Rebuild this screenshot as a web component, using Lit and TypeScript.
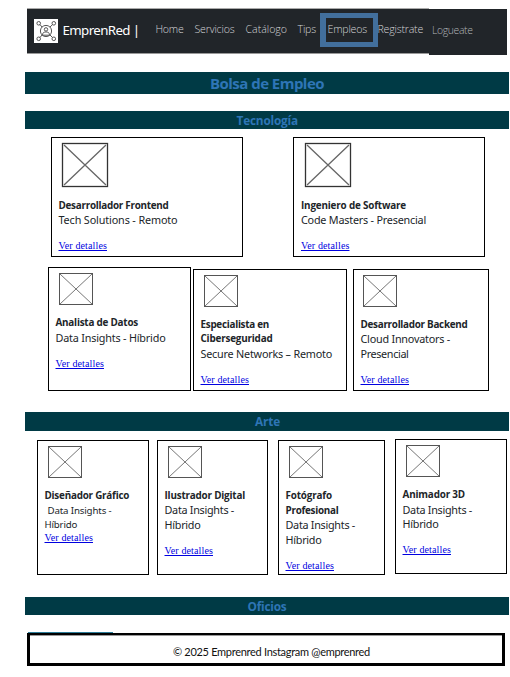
import { LitElement, html, css, svg } from "lit";
import { customElement, property } from "lit/decorators.js";

type Kind = "title" | "sub" | "small" | "link";
interface Line { t: string; k: Kind; w: number; b: number; dx?: number }
interface Job { gap: number; drop: number; w: number; h: number; pad: number; icon: number; big?: boolean; lines: Line[] }

const L = (k: Kind, t: string, w: number, b: number, dx = 0): Line => ({ t, k, w, b, dx });
const details = (b: number, dx = 0) => L("link", "Ver detalles", 48.5, b, dx);

const tech1: Job[] = [
  { gap: 51, drop: 0, w: 192, h: 120, pad: 7.5, icon: 10, big: true, lines: [
    L("title", "Desarrollador Frontend", 110, 72), L("sub", "Tech Solutions - Remoto", 119, 87), details(112)] },
  { gap: 50, drop: 0, w: 192, h: 120, pad: 8, icon: 11, big: true, lines: [
    L("title", "Ingeniero de Software", 105, 72), L("sub", "Code Masters - Presencial", 125, 87), details(112)] },
];
const tech2: Job[] = [
  { gap: 48, drop: 0, w: 143, h: 124, pad: 7.5, icon: 10, lines: [
    L("title", "Analista de Datos", 82.5, 59), L("sub", "Data Insights - Híbrido", 110, 75), details(100)] },
  { gap: 2, drop: 2, w: 154, h: 122, pad: 7.5, icon: 10, lines: [
    L("title", "Especialista en", 68.5, 59), L("title", "Ciberseguridad", 72, 73),
    L("sub", "Secure Networks – Remoto", 131.5, 89), details(114)] },
  { gap: 6, drop: 2, w: 136, h: 122, pad: 7.5, icon: 9, lines: [
    L("title", "Desarrollador Backend", 107, 59), L("sub", "Cloud Innovators -", 89.5, 74),
    L("sub", "Presencial", 48, 89), details(114)] },
];
const art: Job[] = [
  { gap: 37, drop: 1, w: 112, h: 135, pad: 7.5, icon: 10, lines: [
    L("title", "Diseñador Gráfico", 84.7, 59), L("small", "Data Insights -", 64, 74, 3),
    L("small", "Híbrido", 32.7, 88), details(101)] },
  { gap: 8, drop: 1, w: 111, h: 135, pad: 7.5, icon: 10, lines: [
    L("title", "Ilustrador Digital", 80.5, 59), L("sub", "Data Insights -", 69.5, 74),
    L("sub", "Híbrido", 36, 89), details(114)] },
  { gap: 10, drop: 1, w: 107, h: 135, pad: 7.5, icon: 10, lines: [
    L("title", "Fotógrafo", 46.5, 59), L("title", "Profesional", 53, 74),
    L("sub", "Data Insights -", 69.5, 89), L("sub", "Híbrido", 36, 104), details(129)] },
  { gap: 10, drop: 0, w: 112, h: 135, pad: 7.5, icon: 10, lines: [
    L("title", "Animador 3D", 62.5, 59), L("sub", "Data Insights -", 69.5, 75),
    L("sub", "Híbrido", 36, 89), details(114)] },
];

/** Text run whose tracking is computed so that it fills a given width. */
@customElement("fit-text")
class FitText extends LitElement {
  static styles = css`
    :host { display: block; white-space: nowrap; }
    .run { display: inline-block; white-space: pre; text-decoration: inherit; }
  `;
  @property() text = "";
  @property({ type: Number }) width = 0;
  updated() {
    const run = this.renderRoot.querySelector(".run") as HTMLElement;
    run.style.letterSpacing = "0px";
    const natural = run.getBoundingClientRect().width;
    const step = (this.width - natural) / this.text.length;
    run.style.letterSpacing = step.toFixed(3) + "px";
  }
  render() { return html`<span class="run">${this.text}</span>`; }
}

@customElement("job-card")
class JobCard extends LitElement {
  static styles = css`
    :host { display: block; flex: none; }
    .card { box-sizing: border-box; height: 100%; border: 1px solid #000; padding-top: 4px; background: #fff; }
    svg { display: block; height: 34px; width: 36px; }
    svg.big { width: 48px; height: 46px; }
    .lines { height: 0; }
    .line { height: 15px; line-height: 15px; color: #212529; }
    .title { font: 700 9.9px/15px "Open Sans", "Noto Sans", sans-serif; }
    .sub { font: 400 10.8px/15px "Noto Sans", "Open Sans", sans-serif; }
    .small { font: 400 9.7px/15px "Noto Sans", "Open Sans", sans-serif; }
    .link { font: 400 10px/15px "Liberation Serif", serif; color: #0000e0; text-decoration: underline; }
  `;
  @property({ attribute: false }) job!: Job;
  render() {
    const j = this.job;
    const top = j.big ? 51 : 39;
    const base: Record<Kind, number> = { title: 11, sub: 12, small: 11, link: 11 };
    let y = top;
    return html`<div class="card">
      ${j.big
        ? html`<svg class="big" style="margin-left:${j.icon - 1}px" viewBox="0 0 48 46">
            ${svg`<rect x="1.5" y="1.5" width="45" height="43" fill="none" stroke="#333" stroke-width="1.3"/>
            <path d="M3 3L45 43M45 3L3 43" stroke="#666" stroke-width="1.3"/>`}</svg>`
        : html`<svg style="margin-left:${j.icon - 1}px" viewBox="0 0 36 34">
            ${svg`<rect x="1.5" y="1.5" width="33" height="31" fill="none" stroke="#555" stroke-width="1"/>
            <path d="M2 2L34 32M34 2L2 32" stroke="#777" stroke-width="1"/>`}</svg>`}
      <div class="lines">
        ${j.lines.map((l) => {
          const start = l.b - base[l.k];
          const gap = start - y;
          y = start + 15;
          return html`<fit-text class="line ${l.k}" .text=${l.t} .width=${l.w}
            style="margin-top:${gap}px;margin-left:${j.pad - 1 + (l.dx ?? 0)}px"></fit-text>`;
        })}
      </div>
    </div>`;
  }
}

@customElement("app-root")
class AppRoot extends LitElement {
  static styles = css`
    :host { display: block; width: 510px; height: 677px; overflow: hidden; background: #fff; font-family: "Open Sans", "Noto Sans", sans-serif; }
    header { display: flex; height: 47px; padding: 8px 0 0 27px; }
    .nav { box-sizing: border-box; display: flex; width: 402px; height: 46px; background: #212529; border-top: 1px solid #aaa; border-bottom: 1px solid #999; }
    .logo { display: block; width: 24px; height: 24px; margin: 10px 4.5px 0 7px; flex: none; }
    .brand { font-family: "Noto Sans", sans-serif; font-size: 13.3px; line-height: 20px; color: #fff; margin-top: 11px; width: 93px; flex: none; }
    .item { font-size: 10.6px; line-height: 16px; color: #d2d4d6; font-weight: 300; margin-top: 12px; flex: none; }
    .active { box-sizing: border-box; width: 58px; height: 34px; border: 5px solid #426f9c; border-left-width: 6px; margin: 4px 0 0 4px; padding: 3px 0 0 1.5px; flex: none; }
    .active .item { margin-top: 0; }
    .login { width: 78px; height: 46px; margin-top: 1px; background: #212529; }
    .login .item { margin: 13px 0 0 3px; color: #b3b6b9; font-size: 10.4px; }
    .bar { box-sizing: border-box; width: 484px; margin-left: 25px; height: 18px; display: flex; background: #003a45; color: #2e75b6; font-weight: 700; font-size: 11.8px; line-height: 18px; }
    .main { height: 22px; font-size: 15px; line-height: 22px; margin-top: 17px; }
    .tec { margin-top: 17px; }
    .arte { margin-top: 21px; height: 19px; line-height: 19px; }
    .oficios { margin-top: 22px; }
    .row { display: flex; align-items: flex-start; }
    .r1 { margin-top: 8px; height: 120px; }
    .r2 { margin-top: 10px; height: 124px; }
    .r3 { margin-top: 8px; height: 136px; }
    .accent { width: 85px; height: 1px; margin: 17px 0 0 28px; background: #2c7c98; }
    footer { box-sizing: border-box; width: 478px; height: 33px; margin-left: 27px; border: 3px solid #000; border-top-width: 2px; box-shadow: inset 0 1px #999; display: flex; padding: 9px 0 0 143px; font: 400 11px/16px Lato, "Noto Sans", sans-serif; color: #111; }
  `;
  row(cls: string, jobs: Job[]) {
    return html`<section class="row ${cls}">${jobs.map((j) => html`<job-card .job=${j}
      style="margin-left:${j.gap}px;margin-top:${j.drop}px;width:${j.w}px;height:${j.h}px"></job-card>`)}</section>`;
  }
  bar(cls: string, text: string, left: number, width: number) {
    return html`<div class="bar ${cls}"><fit-text .text=${text} .width=${width} style="margin-left:${left}px"></fit-text></div>`;
  }
  item(text: string, width: number, left = 0) {
    return html`<fit-text class="item" .text=${text} .width=${width} style="margin-left:${left}px"></fit-text>`;
  }
  render() {
    return html`
      <header>
        <nav class="nav">
          <svg class="logo" viewBox="0 0 24 24">
            <rect width="24" height="24" fill="#fff"/>
            <g fill="none" stroke="#444" stroke-width="0.9">
              <circle cx="12" cy="12" r="5.6"/>
              <circle cx="12" cy="10.4" r="1.7"/>
              <path d="M8.6 16.2v-1c0-3 6.8-3 6.8 0v1z"/>
              <circle cx="4.7" cy="4.3" r="1.8"/><circle cx="19.8" cy="4.3" r="1.8"/>
              <circle cx="4.7" cy="19.8" r="1.8"/><circle cx="19.8" cy="19.8" r="1.8"/>
              <path d="M6 5.6L8 8M18.5 5.6L16 8M6 18.5L8 16M18.5 18.5L16 16"/>
            </g>
          </svg>
          <fit-text class="brand" .text=${"EmprenRed |"} .width=${77}></fit-text>
          ${this.item("Home", 28)}
          ${this.item("Servicios", 40, 11)}
          ${this.item("Catálogo", 41.5, 11)}
          ${this.item("Tips", 18.5, 10.5)}
          <div class="active">${this.item("Empleos", 39.5)}</div>
          ${this.item("Registrate", 45.5, -0.5)}
        </nav>
        <div class="login"><fit-text class="item" .text=${"Logueate"} .width=${40.5}></fit-text></div>
      </header>
      ${this.bar("main", "Bolsa de Empleo", 185, 114)}
      ${this.bar("tec", "Tecnología", 211.5, 61.5)}
      ${this.row("r1", tech1)}
      ${this.row("r2", tech2)}
      ${this.bar("arte", "Arte", 230, 25)}
      ${this.row("r3", art)}
      ${this.bar("oficios", "Oficios", 222.5, 39)}
      <div class="accent"></div>
      <footer><fit-text .text=${"© 2025 Emprenred Instagram @emprenred"} .width=${197}></fit-text></footer>
    `;
  }
}
